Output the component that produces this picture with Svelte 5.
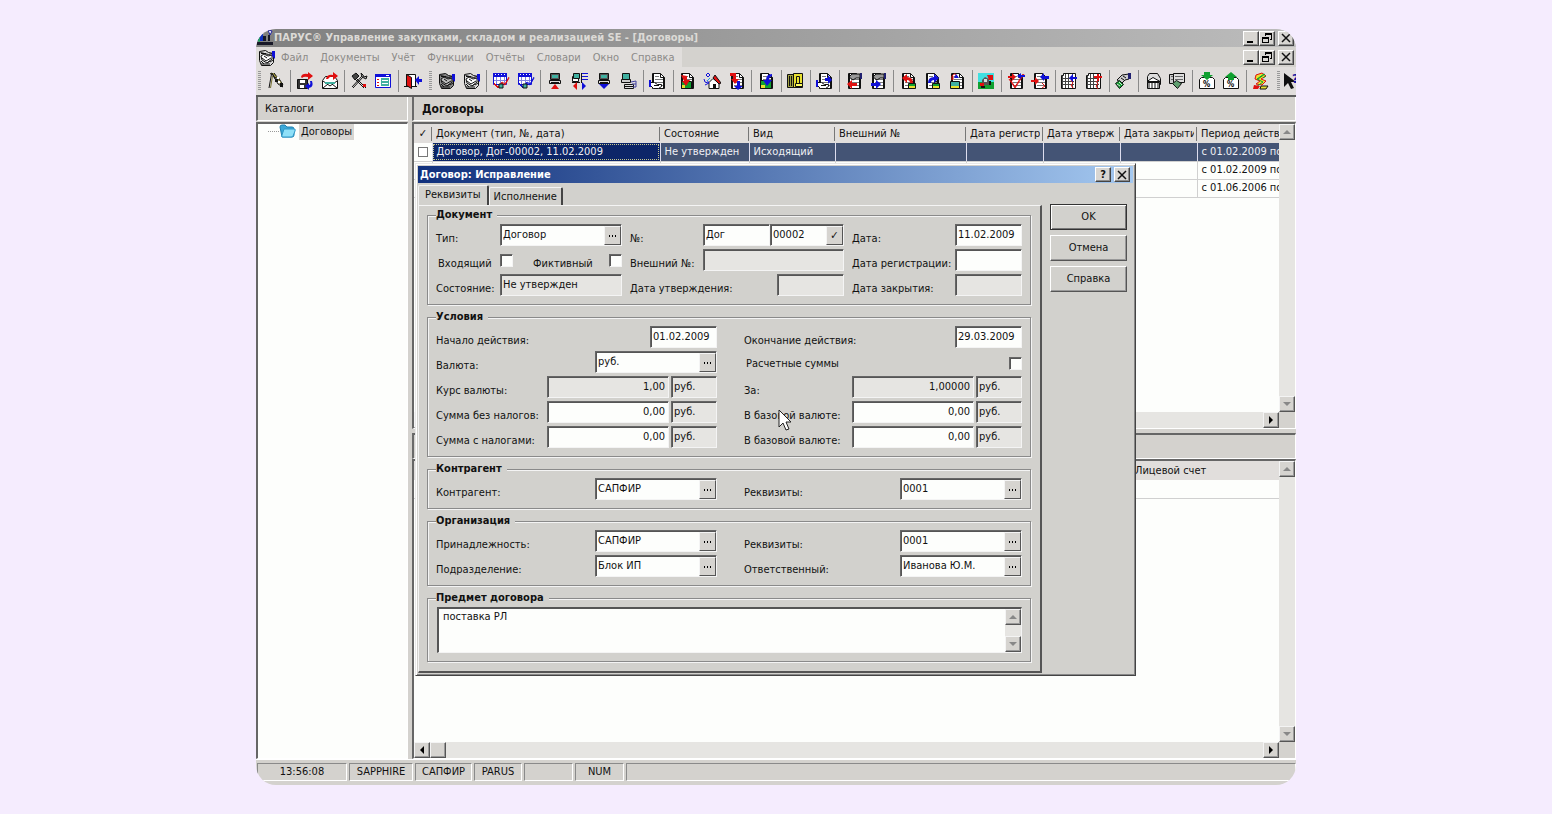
<script>
  const menu = ["Файл", "Документы", "Учёт", "Функции", "Отчёты", "Словари", "Окно", "Справка"];

  // icon layers: [fill, stroke, path], drawn on an 18x18 grid
  const K = "#111";
  const R = "#e01010";
  const B = "#1010d8";
  const G = "#10a030";
  const T = "#40b0a0";
  const Y = "#e8e030";
  const N = "none";

  const page = [
    ["#fff", K, "M3.5 1.5h8l4 4v11h-12z"],
    [N, K, "M11.5 1.5v4h4M4.5 2v14M14.5 6v10"],
    [N, "#777", "M6 4.5h4M6 7.5h8M6 10.5h8M6 13.5h8"],
  ];
  const grid = [
    ["#fff", K, "M1.5 3.5h2v-2h12v15h-14z"],
    [N, "#444", "M2.5 4v12M5.5 2v14M8.5 2v14M12.5 2v14M2 6.5h12M2 9.5h12M2 12.5h12"],
  ];
  const pc = [
    ["#555", K, "M4.5 1.5h9v6h-9z"],
    [T, N, "M6 3h6v3h-6z"],
    ["#ddd", K, "M3.5 8.5h11v3h-11z"],
    [N, K, "M5 10.5h8"],
  ];
  const calendar = [
    ["#fff", B, "M1.5 2.5h13v10h-13z"],
    [B, N, "M1 1h14v4H1z"],
    [N, "#fff", "M3 2.5h1M6 2.5h1M9 2.5h1M12 2.5h1"],
    [N, "#8080e0", "M4.5 5v7M8.5 5v7M12.5 5v7M2 8.5h12"],
  ];
  const hand = [
    ["#fff", K, "M1.5 10.5h4l3 2h4v2l-3 2h-5l-3-3z"],
    [B, N, "M0 8h2v7H0z"],
    [N, K, "M5 13.5h5"],
  ];
  const topHand = [
    ["#999", K, "M4 5l3-3h8v4h-4l-3 2z"],
    ["#202070", N, "M15 1h2v6h-2z"],
  ];
  const lock = [
    [G, K, "M9.5 11.5h7v5h-7z"],
    [Y, N, "M10 14h6v2h-6z"],
    [N, K, "M11.5 11V9.5h3v2"],
  ];
  const book = (cover, sheet) => [
    [cover, K, "M1.5 2.5l6-1 3 2 5 1v9l-3 3h-9l-2-5z"],
    [N, K, "M2.500 3.500l8 2 4-1M3 4.500h5"],
    [sheet, K, "M3 7l3-2 4 2 4-1v4l-5 4-5-3z"],
    [N, K, "M4 9l4 3 5-3M3 15h9M6 7l3 2M12 13l3-2M3 12l3 3M9 14l3-2"],
    [B, N, "M14 2h3v8l-3-3z"],
  ];
  const arrowLeft = (c, y) => [c, N, `M2 ${y}l5-4v3h5v3H7v3z`];
  const arrowRight = (c, y) => [c, N, `M12 ${y}l-5-4v3H2v3h5v3z`];

  const icons = {
    flags: [
      ["#aaa040", K, "M3 2l2-1 3 5 2-1-3-4"],
      [N, K, "M4.500 2L2 16M5 2l4 6 2-3 5 8M7 5l4 7 5 3"],
      [N, "#777030", "M5.500 4L3.500 16M9 4l6 8M12 7v5"],
      [K, N, "M8 7h3v3H8zM13 11h3v4h-3z"],
      ["#fff", N, "M10 5h2v2h-2zM11 9h2v2h-2z"],
    ],
    save: [
      ["#333", K, "M1.5 7.5h10v9h-10z"],
      ["#fff", N, "M4 8h5v3H4zM4 13h4v3H4z"],
      [R, N, "M5 5q1-4 7-3V0l5 4-5 4V5q-4-1-6 1z"],
      [B, N, "M16 9q2 6-3 7v2l-4-4 4-3v2q2 0 1-4z"],
    ],
    mail: [
      ["#fff", K, "M1.5 8.5l3-4h9l3 4v8h-15z"],
      [N, K, "M2 9l7 5 7-5M2 16l5-4M16 16l-5-4"],
      [T, N, "M4 10h10v2H4z"],
      [R, N, "M5 7q1-5 7-4V0l5 4-5 4V5q-3-1-5 2z"],
    ],
    tools: [
      [N, K, "M3 16L13 5M2 15L12 4M6 6l10 10M5 7l9 9"],
      ["#444", K, "M2 4l4-3 3 3-4 4z"],
      ["#bbb", K, "M11 1l1 4 4 2 1-3-3 1-1-2z"],
      [R, N, "M13 12h3v3h-3z"],
    ],
    form: [
      ["#fff", B, "M1.5 2.5h15v13h-15z"],
      [B, N, "M1 2h16v3H1z"],
      [T, N, "M7 6h8v8H7z"],
      [N, R, "M3 7.5h2M3 10.5h2M3 13.5h2"],
      [N, "#fff", "M12 3.5h3M8 8.5h6M8 11.5h6"],
    ],
    exit: [
      ["#fff", K, "M2.5 2.5h9v12h-9z"],
      [R, K, "M2.5 2.5l5 3v11l-5-3z"],
      [N, K, "M0 14.5h3M8 14.5h5"],
      [B, N, "M11 8l4-4v3h3v3h-3v3z"],
    ],
    bookGrey: book("#888", "#bbb"),
    bookWhite: book("#ddd", "#fff"),
    planRed: [...calendar, [N, R, "M2 11l4 4 4-5 3 2 4-7M2 12l4 4 4-5 3 2 4-7"], [T, K, "M7 12h4v4H7z"]],
    planBlue: [...calendar, [N, B, "M2 11l4 4 4-5 3 2 4-7M2 12l4 4 4-5 3 2 4-7"], [T, K, "M6 12h4v4H6z"]],
    pcUp: [...pc, [R, N, "M9 12l4 5H5z"]],
    pcList: [
      ["#fff", K, "M1.5 4.5h6v5h-6z"],
      [T, K, "M2.5 1.5h6v5h-6z"],
      [N, B, "M11 1.5h6M11 4.5h6M11 7.5h6"],
      [N, K, "M10.5 1v10M1 10.5h8"],
      [R, N, "M2 14l4-4v8z"],
      [B, N, "M15 14l-4-4v8z"],
    ],
    pcDown: [...pc, [B, N, "M9 17l5-5H4z"]],
    pcPrint: [
      ["#ccc", K, "M1.5 7.5h9v3h-9z"],
      [T, K, "M2.5 1.5h7v6h-7z"],
      ["#ddd", K, "M4.5 12.5h9v4h-9z"],
      [N, K, "M5 14.5h8"],
      [N, "#4040a0", "M11 10l5-1v6h-3M12 12h4"],
    ],
    docHand: [...page, ...hand],
    docIn: [...page, [G, K, "M3.5 9.5h10v7h-10z"], [Y, N, "M4 13h3v3H4z"], [R, N, "M3 3l6 1v4h3l-4 6-4-5h2z"]],
    house: [
      ["#fff", K, "M6 16.5v-6l4-4 6 5v5z"],
      [R, K, "M10 6l2-3 6 8-2 1z"],
      [K, N, "M10 12h3v5h-3z"],
      [N, B, "M5 1l2 2-2 2-2-2zM1 7q0 4 4 4M4 8l2 3-4 2"],
      [N, "#20a0e0", "M7 6L4 9"],
    ],
    docSwap: [...page, [R, N, "M2 1h6v6h3l-4 5-4-5h2V4H2z"], [B, N, "M10 18l-4-4h3V9h3v5h3z"]],
    docPaste: [...page, [G, K, "M3.5 8.5h11v8h-11z"], [Y, N, "M4 13h4v3H4z"], [B, N, "M15 2q-6 0-6 6H6l4 6 5-6h-3q0-3 3-4z"]],
    ledger: [
      ["#a0a040", K, "M1.5 2.5h7v13h-7z"],
      [Y, K, "M7.5 1.5h9v14h-9z"],
      [N, K, "M3.5 4v10M5.5 4v10M10.5 4.500h3v7h-3z"],
      ["#ffff60", K, "M9.500 11.5h7v3h-7z"],
    ],
    docGive: [...page, ...hand, [B, N, "M9 6h3V3l4 5-4 4V9H9z"]],
    handRed: [...page, ...topHand, arrowLeft(R, 12)],
    handBlue: [...page, ...topHand, arrowRight(B, 12)],
    lockRed: [...page, ...lock, [R, N, "M3 6l5-4v3q6 0 6 6h-3q0-3-3-3v3z"]],
    lockBlue: [...page, ...lock, [B, N, "M16 6l-5-4v3q-6 0-6 6h3q0-3 3-3v3z"]],
    lockBoth: [...page, [T, K, "M2.5 9.5h9v7h-9z"], [Y, N, "M3 14h8v2H3z"], [N, R, "M4 8V4q3-4 5 0v2M5 8V4"], [B, N, "M8 2l3 4H6z"]],
    plant: [
      ["#40e0e0", N, "M1 1h16v9H1z"],
      [G, N, "M1 10h16v7H1z"],
      ["#555", N, "M5 8l3-3 4 2v6H5z"],
      [R, N, "M10 3h6v5h-4zM3 11h4v3H3z"],
      [K, N, "M4 14h4v2H4zM12 9h2v4h-2z"],
      ["#ddd", N, "M7 7h3v3H7z"],
    ],
    docCheck: [...page, [N, R, "M2 7l6 9 9-14M3 7l5 8 8-13"], [R, N, "M1 4h4V1l4 4-4 4V6H1z"], [B, N, "M10 4l4-3v2h4v2h-4v2z"]],
    docMove: [...page, [R, N, "M0 8h4V5l4 4-4 4v-3H0z"], [B, N, "M9 5l4-4v3h5v3h-5v2z"], [N, R, "M11 11l3 3-3 2"]],
    gridBlue: [...grid, [N, R, "M11 8l2 3-2 2 2 3"], [B, N, "M9 6l4-4v3h4v2h-4v3z"]],
    gridRed: [...grid, [N, R, "M11 9l2 3-2 2 2 3"], [R, N, "M9 4h3V2h2v2h3v2h-3v3h-2V6H9z"]],
    pay: [
      ["#ccc", K, "M3 8l5-5 7-1v5l-4 1-3 3z"],
      ["#202070", N, "M14 1h3v6h-3z"],
      [G, K, "M1.5 11.5l4-3 4 4-4 4z"],
      [N, "#ddd", "M3 12l3 2M5 10l3 3"],
      [N, K, "M7 6l3 2M9 4l3 2"],
    ],
    bank: [
      ["#ddd", K, "M3.5 4.5l2-3h8l3 5v6h-13z"],
      ["#fff", K, "M3 9.5l6-4 7 4z"],
      ["#888", K, "M3.5 10.5h12v6h-12z"],
      [N, "#fff", "M6.5 11v5M9.5 11v5M12.5 11v5"],
    ],
    bills: [
      ["#ccc", K, "M1.5 2.5h9v9h-9z"],
      ["#ddd", K, "M5.5 1.5h11v9h-11z"],
      [N, "#666", "M3 4.500h2M3 7.500h2M7 4.5h8M7 7.5h8"],
      ["#60a070", K, "M4.5 11.5l4-3 5 3-4 5z"],
    ],
    rateDown: [["#fff", K, "M1.5 7.5l2-2h11l2 2v9h-15z"], [G, N, "M6 0h6v3h3L9 8 3 3h3z"]],
    rateUp: [["#fff", K, "M1.5 7.5l2-2h11l2 2v9h-15z"], [G, N, "M6 8h6V5h3L9 0 3 5h3z"]],
    party: [
      [Y, R, "M4 3l6-2 4 3-5 3 5 2-4 4-6-1 4-3-5-2z"],
      [N, G, "M12 2l-7 5 6 3-7 5M14 4l-3 2M13 2l-7 5"],
      [R, N, "M2 13l6 1-2 3H1z"],
      [Y, K, "M9 14h7l-2 3H8z"],
    ],
    help: [[K, N, "M1 1v14l4-4 3 6 3-1-3-6h5z"]],
  };

  // "|" is a separator, "grip" the drag handle of a bar
  const toolbar = [
    "grip", "flags", "|", "save", "mail", "|", "tools", "form", "|", "exit",
    "grip", "bookGrey", "bookWhite", "|", "planRed", "planBlue", "|",
    "pcUp", "pcList", "pcDown", "pcPrint", "|", "docHand", "|",
    "docIn", "house", "docSwap", "|", "docPaste", "|", "ledger", "|", "docGive", "|",
    "handRed", "handBlue", "|", "lockRed", "lockBlue", "lockBoth", "|", "plant", "|",
    "docCheck", "docMove", "|", "gridBlue", "gridRed", "|", "pay", "|",
    "bank", "bills", "|", "rateDown", "rateUp", "|", "party", "grip", "help",
  ];

  const columns = [
    "Документ (тип, №, дата)", "Состояние", "Вид", "Внешний №",
    "Дата регистр", "Дата утверж", "Дата закрыти", "Период действ",
  ];
  const rows = [
    ["Договор, Дог-00002, 11.02.2009", "Не утвержден", "Исходящий", "", "", "", "", "с 01.02.2009 по"],
    ["", "", "", "", "", "", "", "с 01.02.2009 по"],
    ["", "", "", "", "", "", "", "с 01.06.2006 по"],
  ];
  const status = ["13:56:08", "SAPPHIRE", "САПФИР", "PARUS", "", "NUM", ""];

  let tab = $state("req");
  let subject = $state("поставка РЛ");
</script>

{#snippet icon(name)}
  <svg class="icon" viewBox="0 0 18 18" aria-hidden="true">
    {#each icons[name] as [fill, stroke, d]}
      <path {d} {fill} {stroke} />
    {/each}
    {#if name === "rateDown" || name === "rateUp"}
      <text class="rate" x="5" y="15">%</text>
    {:else if name === "help"}
      <text class="what" x="9" y="11">?</text>
    {/if}
  </svg>
{/snippet}

{#snippet arrow(dir, dim)}
  <button class="arrow" class:dim aria-label={dir}>
    <svg viewBox="0 0 8 8" aria-hidden="true">
      {#if dir === "up"}<path d="M4 2l4 4H0z" />
      {:else if dir === "down"}<path d="M4 6l4-4H0z" />
      {:else if dir === "left"}<path d="M2 4l4-4v8z" />
      {:else}<path d="M6 4L2 0v8z" />{/if}
    </svg>
  </button>
{/snippet}

{#snippet winButtons()}
  <div class="win-buttons">
    <button class="win-btn" aria-label="Свернуть"><svg viewBox="0 0 12 12"><path d="M2 9h6v2H2z" /></svg></button>
    <button class="win-btn" aria-label="Восстановить">
      <svg viewBox="0 0 12 12"><path d="M4 1h7v7H9V7h1V3H5v1H4zM1 5h7v6H1zM2 7v3h5V7z" fill-rule="evenodd" /></svg>
    </button>
    <button class="win-btn close" aria-label="Закрыть"><svg viewBox="0 0 12 12"><path class="cross" d="M2 2l8 8M10 2l-8 8" /></svg></button>
  </div>
{/snippet}

{#snippet combo(id, value)}
  <span class="combo">
    <input {id} {value} />
    <button class="pick" aria-label="Выбрать">
      <svg viewBox="0 0 10 10"><path d="M1 4h1v2H1zM4 4h1v2H4zM7 4h1v2H7z" /></svg>
    </button>
  </span>
{/snippet}

{#snippet comboField(id, label, value)}
  <div class="field"><label for={id}>{label}</label>{@render combo(id, value)}</div>
{/snippet}

{#snippet dateField(id, label, value, readonly)}
  <div class="field"><label for={id}>{label}</label><input {id} class="box date" {value} {readonly} /></div>
{/snippet}

{#snippet sumField(id, label, value, readonly)}
  <div class="field">
    <label for={id}>{label}</label>
    <span class="sum">
      <input {id} class="box amount" {value} {readonly} />
      <input class="box unit" value="руб." readonly aria-label="Валюта суммы" />
    </span>
  </div>
{/snippet}

<div class="desktop">
  <div class="window">
    <header class="title-bar">
      <svg class="icon" viewBox="0 0 18 18" aria-hidden="true">
        <path d="M1 12l6-9v9z" fill="#1030c0" />
        <path d="M1 12l3-5v6z" fill="#20a060" />
        <path d="M7 12V7h3v5zM12 12V6h2v6zM1 13h16v3H1z" fill="#181828" />
        <path d="M12 1l4 1-2 4z" fill="#fff" stroke="#2020a0" />
      </svg>
      <span class="app-title">ПАРУС® Управление закупками, складом и реализацией SE - [Договоры]</span>
      {@render winButtons()}
    </header>

    <nav class="menu-bar">
      <div class="menu-items">
        {@render icon("bookWhite")}
        {#each menu as item}
          <button class="menu-item">{item}</button>
        {/each}
      </div>
      {@render winButtons()}
    </nav>

    <div class="toolbar">
      {#each toolbar as item}
        {#if item === "|"}
          <span class="sep"></span>
        {:else if item === "grip"}
          <span class="grip"></span>
        {:else}
          <button class="tool" class:cut={item === "help"} aria-label={item}>{@render icon(item)}</button>
        {/if}
      {/each}
    </div>

    <div class="workspace">
      <aside class="catalogs">
        <h2 class="pane-title plain">Каталоги</h2>
        <div class="tree">
          <span class="branch"></span>
          <svg class="folder" viewBox="0 0 17 14" aria-hidden="true">
            <path d="M1 3q0-2 2-2h3l2 2h5q2 0 2 2v6q0 2-2 2H3z" fill="#3ba8d8" stroke="#2080b0" />
            <path d="M5 5h10q2 0 1 2l-2 5q0 1-2 1H4q-2 0-1-2z" fill="#8fe0f8" stroke="#2f98c8" />
          </svg>
          <button class="node">Договоры</button>
        </div>
      </aside>

      <main class="content">
        <h2 class="pane-title">Договоры</h2>
        <div class="pane upper">
          <div class="sheet">
            <table>
              <colgroup>
                <col class="c-check" /><col class="c-doc" /><col class="c-state" /><col class="c-kind" />
                <col class="c-ext" /><col class="c-date" /><col class="c-date" /><col class="c-date" /><col />
              </colgroup>
              <thead>
                <tr>
                  <th class="tick">✓</th>
                  {#each columns as column}<th><span class="clip">{column}</span></th>{/each}
                </tr>
              </thead>
              <tbody>
                {#each rows as row, i}
                  <tr class:selected={i === 0}>
                    <td class="tick"><input class="mini" type="checkbox" aria-label="Отметить" /></td>
                    {#each row as cell}<td>{cell}</td>{/each}
                  </tr>
                {/each}
              </tbody>
            </table>
          </div>
          <div class="v-scroll">{@render arrow("up", true)}{@render arrow("down", true)}</div>
          <div class="h-scroll">{@render arrow("left")}{@render arrow("right")}</div>
        </div>

        <h2 class="pane-title second">&nbsp;</h2>
        <div class="pane lower">
          <div class="sheet">
            <table>
              <colgroup><col /><col class="c-account" /></colgroup>
              <thead>
                <tr><th></th><th class="bare">Лицевой счет</th></tr>
              </thead>
              <tbody>
                <tr><td></td><td class="bare"></td></tr>
              </tbody>
            </table>
          </div>
          <div class="v-scroll">{@render arrow("up", true)}{@render arrow("down", true)}</div>
          <div class="h-scroll">
            {@render arrow("left")}
            <span class="thumb"></span>
            {@render arrow("right")}
          </div>
        </div>
      </main>
    </div>

    <footer class="status-bar">
      {#each status as cell, i}
        <span class="cell s{i}">{cell}</span>
      {/each}
    </footer>

    <div class="dialog" role="dialog" aria-label="Договор: Исправление">
      <div class="dialog-title">
        <span>Договор: Исправление</span>
        <button class="win-btn" aria-label="Подсказка">?</button>
        <button class="win-btn close" aria-label="Закрыть"><svg viewBox="0 0 12 12"><path class="cross" d="M2 2l8 8M10 2l-8 8" /></svg></button>
      </div>

      <div class="dialog-body">
        <div class="tabs-area">
          <div class="tabs" role="tablist">
            <button class="tab" class:active={tab === "req"} role="tab" aria-selected={tab === "req"} onclick={() => (tab = "req")}>Реквизиты</button>
            <button class="tab" class:active={tab === "exec"} role="tab" aria-selected={tab === "exec"} onclick={() => (tab = "exec")}>Исполнение</button>
          </div>

          <form class="tab-page" onsubmit={(e) => e.preventDefault()}>
            <fieldset>
              <legend>Документ</legend>
              <div class="three">
                {@render comboField("type", "Тип:", "Договор")}
                <div class="field">
                  <label for="prefix">№:</label>
                  <span class="number">
                    <input id="prefix" class="box prefix" value="Дог" />
                    <span class="combo short">
                      <input value="00002" aria-label="Номер" />
                      <button class="pick" aria-label="Присвоить номер">✓</button>
                    </span>
                  </span>
                </div>
                {@render dateField("date", "Дата:", "11.02.2009")}

                <div class="field checks">
                  <label for="incoming">Входящий</label>
                  <input id="incoming" class="check" type="checkbox" />
                  <label class="fict" for="fictive">Фиктивный</label>
                  <input id="fictive" class="check" type="checkbox" />
                </div>
                <div class="field"><label for="ext">Внешний №:</label><input id="ext" class="box ext" readonly /></div>
                {@render dateField("reg", "Дата регистрации:", "")}

                <div class="field"><label for="state">Состояние:</label><input id="state" class="box state" value="Не утвержден" readonly /></div>
                {@render dateField("approved", "Дата утверждения:", "", true)}
                {@render dateField("closed", "Дата закрытия:", "", true)}
              </div>
            </fieldset>

            <fieldset>
              <legend>Условия</legend>
              <div class="two">
                {@render dateField("start", "Начало действия:", "01.02.2009")}
                {@render dateField("end", "Окончание действия:", "29.03.2009")}
                {@render comboField("currency", "Валюта:", "руб.")}
                <div class="field centered">
                  <label for="calc">Расчетные суммы</label>
                  <input id="calc" class="check" type="checkbox" />
                </div>
                {@render sumField("rate", "Курс валюты:", "1,00", true)}
                {@render sumField("per", "За:", "1,00000", true)}
                {@render sumField("net", "Сумма без налогов:", "0,00")}
                {@render sumField("netBase", "В базовой валюте:", "0,00")}
                {@render sumField("gross", "Сумма с налогами:", "0,00")}
                {@render sumField("grossBase", "В базовой валюте:", "0,00")}
              </div>
            </fieldset>

            <fieldset>
              <legend>Контрагент</legend>
              <div class="two">
                {@render comboField("partner", "Контрагент:", "САПФИР")}
                {@render comboField("partnerReq", "Реквизиты:", "0001")}
              </div>
            </fieldset>

            <fieldset>
              <legend>Организация</legend>
              <div class="two">
                {@render comboField("owner", "Принадлежность:", "САПФИР")}
                {@render comboField("ownerReq", "Реквизиты:", "0001")}
                {@render comboField("unit", "Подразделение:", "Блок ИП")}
                {@render comboField("person", "Ответственный:", "Иванова Ю.М.")}
              </div>
            </fieldset>

            <fieldset>
              <legend>Предмет договора</legend>
              <div class="memo">
                <textarea aria-label="Предмет договора" bind:value={subject}></textarea>
                <div class="memo-scroll">{@render arrow("up", true)}{@render arrow("down", true)}</div>
              </div>
            </fieldset>
          </form>
        </div>

        <div class="actions">
          <button class="action default">OK</button>
          <button class="action">Отмена</button>
          <button class="action">Справка</button>
        </div>
      </div>
    </div>

    <svg class="pointer" viewBox="0 0 13 22" aria-hidden="true">
      <path d="M1 1v17l4-4 3 7 3-1-3-7h5z" fill="#fff" stroke="#222" />
    </svg>
  </div>
</div>

<style>
  :global(body) {
    background: #f5ecfe;
  }

  .desktop {
    display: flex;
    min-height: 100vh;
    padding: 29px 256px;
    box-sizing: border-box;
    font-family: "DejaVu Sans Condensed", Tahoma, "DejaVu Sans", sans-serif;
    font-size: 11px;
    line-height: 14px;
    color: #111;
  }

  .desktop * {
    box-sizing: border-box;
  }

  button,
  input,
  textarea {
    margin: 0;
    padding: 0;
    border: 0;
    border-radius: 0;
    background: none;
    font: inherit;
    color: inherit;
    outline: none;
  }

  .window {
    position: relative;
    flex: 1;
    min-width: 0;
    display: flex;
    flex-direction: column;
    border-radius: 20px;
    background: #d4d2ce;
    overflow: hidden;
  }

  .icon {
    display: block;
    flex: none;
    width: 18px;
    height: 18px;
  }

  .rate {
    font-size: 8px;
    font-weight: 700;
  }

  .what {
    font-size: 13px;
    font-weight: 700;
    fill: #1010a0;
  }

  .title-bar {
    display: flex;
    align-items: center;
    height: 18px;
    background: linear-gradient(90deg, #808080, #bcbcbc);
    color: #dcdad6;
    font-weight: 700;
  }

  .app-title {
    flex: 1;
    white-space: nowrap;
    overflow: hidden;
  }

  .win-buttons {
    display: flex;
    margin-left: auto;
    padding-right: 2px;
  }

  .win-btn {
    display: flex;
    align-items: center;
    justify-content: center;
    width: 16px;
    height: 15px;
    background: #d8d6d2;
    border: 1px solid;
    border-color: #fff #444 #444 #fff;
    box-shadow: inset -1px -1px 0 #8c8c8c;
    font-weight: 700;
    color: #111;
  }

  .win-btn svg {
    width: 12px;
    height: 12px;
  }

  .win-btn.close {
    margin-left: 3px;
  }

  .cross {
    stroke: #111;
    stroke-width: 1.5;
  }

  .menu-bar {
    display: flex;
    align-items: center;
    height: 20px;
  }

  .menu-items {
    display: flex;
    align-items: center;
    gap: 12px;
    height: 20px;
    padding: 1px 7px 0 2px;
    background: #e1dedc;
  }

  .menu-items .icon {
    margin-right: -7px;
  }

  .menu-item {
    color: #8c8a88;
  }

  .toolbar {
    display: flex;
    align-items: center;
    justify-content: space-between;
    height: 30px;
    padding-left: 2px;
    background: #e1dedc;
    border-bottom: 2px solid #5c5c5c;
    overflow: hidden;
  }

  .tool {
    display: flex;
    justify-content: center;
    flex: none;
    width: 24px;
  }

  .tool.cut {
    justify-content: flex-start;
    width: 13px;
  }

  .sep {
    width: 4px;
    height: 22px;
    border-left: 1px solid #8a8a8a;
    margin-left: 2px;
    margin-right: -2px;
  }

  .grip {
    width: 3px;
    height: 20px;
    margin: 0 2px 0 4px;
    background: repeating-linear-gradient(#999 0 1px, #e1dedc 1px 2px);
  }

  .grip:first-child {
    margin-left: 0;
  }

  .workspace {
    flex: 1;
    display: flex;
    gap: 4px;
    min-height: 0;
  }

  .catalogs {
    display: flex;
    flex-direction: column;
    width: 152px;
  }

  .content {
    flex: 1;
    min-width: 0;
    display: flex;
    flex-direction: column;
  }

  .pane-title {
    height: 24px;
    margin: 0;
    padding: 0 8px;
    border-left: 2px solid #6a6a6a;
    border-right: 1px solid #fff;
    border-bottom: 1px solid #fff;
    background: #d4d2ce;
    font-size: 12px;
    font-weight: 700;
    line-height: 24px;
  }

  .pane-title.plain {
    padding: 0 7px;
    font-size: 11px;
    font-weight: 400;
  }

  .pane-title.second {
    height: 26px;
    margin-top: 4px;
    border-top: 2px solid #666;
  }

  .tree {
    flex: 1;
    display: flex;
    align-items: flex-start;
    padding: 0 0 0 10px;
    margin-top: 1px;
    background: #fdfefc;
    border: 1px solid #666;
    border-width: 2px 1px 1px 2px;
    border-right-color: #fff;
    border-bottom-color: #fff;
  }

  .branch {
    width: 11px;
    height: 8px;
    border-bottom: 1px dotted #999;
  }

  .folder {
    width: 17px;
    height: 14px;
    margin-right: 3px;
  }

  .node {
    height: 16px;
    padding: 0 2px;
    background: #d8d6d2;
  }

  .pane {
    display: grid;
    grid-template-columns: minmax(0, 1fr) 16px;
    grid-template-rows: minmax(0, 1fr) 16px;
    margin-top: 1px;
    border: 1px solid #666;
    border-width: 2px 1px 1px 2px;
    border-right-color: #fff;
    border-bottom-color: #fff;
  }

  .pane.upper {
    height: 307px;
  }

  .pane.lower {
    flex: 1;
    margin-top: 0;
  }

  .sheet {
    overflow: hidden;
    background: #fdfefc;
  }

  .v-scroll,
  .h-scroll,
  .memo-scroll {
    display: flex;
    background: #e6e5e2;
  }

  .v-scroll,
  .memo-scroll {
    flex-direction: column;
    justify-content: space-between;
  }

  .h-scroll > :global(:last-child) {
    margin-left: auto;
  }

  .arrow,
  .thumb {
    display: flex;
    align-items: center;
    justify-content: center;
    flex: none;
    width: 16px;
    height: 16px;
    background: #d6d4d0;
    border: 1px solid;
    border-color: #f4f4f4 #555 #555 #f4f4f4;
    box-shadow: inset -1px -1px 0 #999;
  }

  .arrow svg {
    width: 8px;
    height: 8px;
    fill: #000;
  }

  .arrow.dim svg {
    fill: #888;
  }

  table {
    width: 100%;
    table-layout: fixed;
    border-collapse: collapse;
  }

  .c-check { width: 18px; }
  .c-doc { width: 228px; }
  .c-state { width: 89px; }
  .c-kind { width: 86px; }
  .c-ext { width: 131px; }
  .c-date { width: 77px; }
  .c-account { width: 148px; }

  th,
  td {
    padding: 0 0 0 4px;
    text-align: left;
    font-weight: 400;
    white-space: nowrap;
    overflow: hidden;
    text-overflow: clip;
  }

  th {
    height: 19px;
    background: linear-gradient(#777, #777) right center / 1px 14px no-repeat #e1dedc;
  }

  th:last-child,
  th.bare {
    background: #e1dedc;
  }

  .clip {
    display: block;
    margin-right: 3px;
    overflow: hidden;
  }

  th:last-child .clip {
    margin-right: 0;
  }

  td {
    height: 18px;
    border-right: 1px solid #d0d0d0;
    border-bottom: 1px solid #d0d0d0;
  }

  td:last-child {
    border-right: 0;
  }

  .tick {
    padding: 0;
    text-align: center;
  }

  .mini {
    display: block;
    appearance: none;
    width: 10px;
    height: 10px;
    margin: 0 auto;
    border: 1px solid #777;
    background: #fff;
  }

  .selected td {
    background: #445475;
    border-right-color: #dde;
    color: #f0f0f4;
  }

  .selected td.tick {
    background: #fdfefc;
  }

  .selected td:nth-child(2) {
    background: #0c2568;
    outline: 1px dotted #c8c890;
    outline-offset: -2px;
  }

  .status-bar {
    display: flex;
    gap: 2px;
    padding: 3px 0 4px 1px;
    border-top: 1px solid #fff;
  }

  .cell {
    height: 18px;
    border: 1px solid;
    border-color: #8a8a8a #fff #fff #8a8a8a;
    line-height: 16px;
    text-align: center;
  }

  .s0 { width: 90px; }
  .s1 { width: 64px; }
  .s2 { width: 57px; }
  .s3 { width: 48px; }
  .s4,
  .s5 { width: 49px; }
  .s6 { flex: 1; }

  .dialog {
    position: absolute;
    left: 159px;
    top: 134px;
    width: 721px;
    padding: 2px;
    background: #d2d1cd;
    border: 1px solid;
    border-color: #e8e8e8 #444 #444 #e8e8e8;
    box-shadow: inset 1px 1px 0 #fff, inset -1px -1px 0 #888;
  }

  .dialog-title {
    display: flex;
    align-items: center;
    height: 17px;
    padding: 0 3px 0 2px;
    background: linear-gradient(90deg, #10307c, #a4c8f0);
    color: #fff;
    font-weight: 700;
  }

  .dialog-title span {
    flex: 1;
  }

  .dialog-body {
    display: flex;
  }

  .tabs-area {
    width: 624px;
  }

  .tabs {
    display: flex;
    align-items: flex-end;
    height: 22px;
  }

  .tab {
    height: 18px;
    padding: 0 4px;
    border: 1px solid;
    border-color: #f4f4f4 #444 transparent #f4f4f4;
    border-bottom: 0;
    border-right-width: 2px;
    border-radius: 2px 2px 0 0;
  }

  .tab.active {
    height: 20px;
    padding: 0 6px 2px;
  }

  .tab-page {
    display: flex;
    flex-direction: column;
    gap: 4px;
    padding: 1px 9px 9px 8px;
    border: 1px solid;
    border-color: #f4f4f4 #555 #555 #f4f4f4;
    border-right-width: 2px;
    border-bottom-width: 2px;
  }

  fieldset {
    min-width: 0;
    margin: 0;
    padding: 1px 8px 8px;
    border: 1px solid #8a8a8a;
    box-shadow: 1px 1px 0 #f4f4f4, inset 1px 1px 0 #f4f4f4;
  }

  legend {
    padding: 0 5px 0 0;
    background: #d2d1cd;
    font-weight: 700;
    line-height: 16px;
  }

  .three {
    display: grid;
    grid-template-columns: 186px 1fr 170px;
    gap: 3px 8px;
  }

  .two {
    display: grid;
    grid-template-columns: 281px 1fr;
    gap: 3px 27px;
  }

  .field {
    display: flex;
    align-items: flex-end;
    justify-content: space-between;
    height: 22px;
    white-space: nowrap;
  }

  .field.centered {
    align-items: center;
    padding: 3px 0 0 2px;
  }

  .field.checks {
    justify-content: flex-start;
    padding-left: 2px;
  }

  .checks label {
    min-width: 62px;
  }

  .checks .fict {
    margin: 0 auto 0 20px;
  }

  .checks .check {
    align-self: center;
  }

  .box,
  .combo,
  .check {
    border: 1px solid;
    border-color: #666 #f4f4f4 #f4f4f4 #666;
    box-shadow: inset 1px 1px 0 #555;
    background: #fdfefc;
  }

  .box {
    height: 22px;
    padding: 0 2px 2px;
  }

  .box:read-only {
    background: #e6e5e2;
  }

  .check {
    appearance: none;
    width: 13px;
    height: 13px;
  }

  .check:checked {
    background: #555;
  }

  .date,
  .prefix { width: 67px; }
  .state,
  .amount { width: 122px; }
  .ext { width: 141px; }
  .unit { width: 46px; }

  .amount {
    padding-right: 3px;
    text-align: right;
  }

  .sum {
    display: flex;
    gap: 2px;
  }

  .number {
    display: flex;
  }

  .combo {
    display: flex;
    width: 122px;
    height: 22px;
    padding: 1px 0 0 1px;
  }

  .combo.short {
    width: 74px;
  }

  .combo input {
    flex: 1;
    min-width: 0;
    padding: 0 1px 2px;
  }

  .pick {
    display: flex;
    align-items: center;
    justify-content: center;
    width: 17px;
    background: #d6d4d0;
    border: 1px solid;
    border-color: #f4f4f4 #555 #555 #f4f4f4;
  }

  .pick svg {
    width: 10px;
    height: 10px;
  }

  .memo {
    display: flex;
    height: 46px;
    margin: 0 0 0 1px;
    border: 1px solid;
    border-color: #555 #f4f4f4 #f4f4f4 #555;
    border-width: 2px 1px 1px 2px;
    background: #fdfefc;
  }

  textarea {
    flex: 1;
    padding: 1px 4px;
    resize: none;
    overflow: hidden;
  }

  .actions {
    display: flex;
    flex-direction: column;
    gap: 5px;
    padding: 21px 0 0 8px;
  }

  .action {
    width: 77px;
    height: 26px;
    border: 1px solid;
    border-color: #fff #555 #555 #fff;
    box-shadow: inset -1px -1px 0 #999;
    text-align: center;
  }

  .action.default {
    border-color: #333;
    box-shadow: inset 1px 1px 0 #fff, inset -1px -1px 0 #777;
  }

  .pointer {
    position: absolute;
    left: 522px;
    top: 380px;
    width: 13px;
    height: 22px;
  }
</style>
